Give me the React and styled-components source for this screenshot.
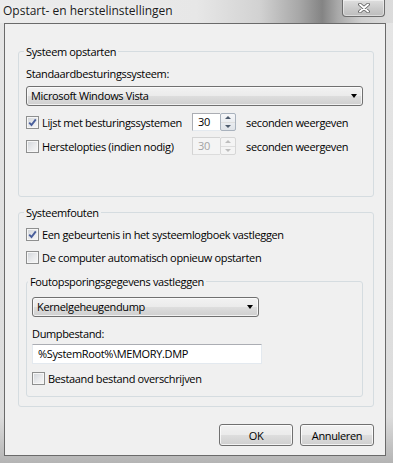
import styled, { createGlobalStyle } from "styled-components";

const GlobalStyle = createGlobalStyle`
  html, body {
    margin: 0;
    padding: 0;
  }
  body {
    font-family: "Open Sans", "Noto Sans", sans-serif;
    font-size: 11px;
    letter-spacing: -0.35px;
    color: #000;
    background: #fff;
  }
  * {
    box-sizing: border-box;
  }
`;

const Window = styled.div`
  width: 393px;
  height: 463px;
  display: flex;
  flex-direction: column;
  background: linear-gradient(180deg, #e6e6e6 0%, #dcdcdc 90%, #b4b4b4 100%);
`;

const TitleBar = styled.div`
  height: 23px;
  flex: none;
  display: flex;
  align-items: flex-start;
  padding: 3px 8px 0 3px;
  background: linear-gradient(
    90deg,
    #ececec 0%,
    #e7e7e7 50%,
    #d2d2d2 66%,
    #a8a8a8 76%,
    #848484 82%,
    #a9a9a9 86%,
    #cfcfcf 92%,
    #dcdcdc 100%
  );
`;

const Title = styled.span`
  font-size: 12px;
  line-height: 16px;
  letter-spacing: 0;
  color: #1b1b1b;
  text-shadow: 0 0 6px rgba(255, 255, 255, 0.9);
`;

const CloseButton = styled.div`
  margin: -3px 0 0 auto;
  width: 43px;
  height: 17px;
  border: 1px solid #6d6d6d;
  border-top: none;
  border-radius: 0 0 4px 4px;
  background: linear-gradient(180deg, #dedede 0%, #cacaca 55%, #bdbdbd 100%);
  box-shadow: inset 0 0 0 1px rgba(255, 255, 255, 0.45);
  display: flex;
  align-items: center;
  justify-content: center;
`;

const Client = styled.div`
  flex: 1;
  margin: 0 7px 7px 4px;
  border: 1px solid #6a6a6a;
  background: #f0f0f0;
  padding: 20px 11px 0 13px;
  display: flex;
  flex-direction: column;
`;

const Group = styled.fieldset`
  margin: ${(p) => p.$top || 0}px 0 0 0;
  padding: ${(p) => p.$pad};
  border: 1px solid #d5dce0;
  border-radius: 3px;
  min-width: 0;
  display: flex;
  flex-direction: column;
  align-items: flex-start;
  align-self: stretch;
`;

const Legend = styled.legend`
  padding: 0 2px;
  margin-left: ${(p) => p.$shift}px;
  line-height: 15px;
`;

const Label = styled.div`
  line-height: 15px;
  margin-top: ${(p) => p.$top || 0}px;
`;

const Combo = styled.div`
  margin-top: ${(p) => p.$top || 0}px;
  width: ${(p) => p.$width}px;
  height: 20px;
  border: 1px solid #707070;
  border-radius: 3px;
  background: linear-gradient(180deg, #f2f2f2 0%, #ebebeb 48%, #dddddd 52%, #cfcfcf 100%);
  box-shadow: inset 0 0 0 1px rgba(255, 255, 255, 0.7);
  display: flex;
  align-items: center;
  padding: 0 5px 0 4px;
  line-height: 18px;
`;

const ComboText = styled.span`
  flex: 1;
`;

const Arrow = styled.span`
  width: 0;
  height: 0;
  border-left: 3.5px solid transparent;
  border-right: 3.5px solid transparent;
  border-top: 4px solid #000;
`;

const OptionGrid = styled.div`
  margin-top: 6px;
  display: grid;
  grid-template-columns: 166px 54px auto;
  grid-auto-rows: 20px;
  row-gap: 4px;
  align-items: center;
`;

const CheckRow = styled.label`
  display: flex;
  align-items: center;
  gap: 3px;
  height: 20px;
  margin-top: ${(p) => p.$top || 0}px;
  line-height: 15px;
`;

const Box = styled.span`
  width: 13px;
  height: 13px;
  flex: none;
  border: 1px solid #8e8f8f;
  background: linear-gradient(135deg, #d0d4d9 0%, #e9eaec 55%, #f7f7f7 100%);
  box-shadow: inset 0 0 0 1px #f6f6f6;
  display: flex;
  align-items: center;
  justify-content: center;
`;

const Spin = styled.div`
  display: flex;
  width: 44px;
  height: 18px;
`;

const SpinEdit = styled.div`
  width: 28px;
  height: 18px;
  border: 1px solid ${(p) => (p.$disabled ? "#d3d3d3" : "#abadb3")};
  border-right: none;
  border-bottom-color: ${(p) => (p.$disabled ? "#dcdcdc" : "#e3e9ef")};
  background: ${(p) => (p.$disabled ? "#f4f4f4" : "#fff")};
  color: ${(p) => (p.$disabled ? "#a3a3a3" : "#000")};
  padding-left: 5px;
  line-height: 16px;
`;

const SpinButtons = styled.div`
  width: 16px;
  height: 18px;
  border: 1px solid ${(p) => (p.$disabled ? "#d6d6d6" : "#a9b2bd")};
  border-radius: 2px;
  display: flex;
  flex-direction: column;
  background: ${(p) => (p.$disabled ? "#f4f4f4" : "linear-gradient(180deg, #f6f7f9, #dfe3e8)")};
`;

const SpinHalf = styled.div`
  flex: 1;
  display: flex;
  align-items: center;
  justify-content: center;
  & + & {
    border-top: 1px solid ${(p) => (p.$disabled ? "#dedede" : "#b8c0ca")};
  }
`;

const Tri = styled.span`
  width: 0;
  height: 0;
  border-left: 3px solid transparent;
  border-right: 3px solid transparent;
  ${(p) => (p.$up ? "border-bottom" : "border-top")}: 3px solid
    ${(p) => (p.$disabled ? "#bdbdbd" : "#4d5b6d")};
`;

const Edit = styled.div`
  margin-top: ${(p) => p.$top || 0}px;
  width: ${(p) => p.$width}px;
  height: 20px;
  border: 1px solid #e3e9ef;
  border-top-color: #abadb3;
  background: #fff;
  padding-left: 5px;
  line-height: 18px;
`;

const ButtonRow = styled.div`
  margin-top: 17px;
  display: flex;
  justify-content: flex-end;
  gap: 7px;
`;

const Button = styled.div`
  width: 74px;
  height: 22px;
  border: 1px solid #707070;
  border-radius: 3px;
  background: linear-gradient(180deg, #f2f2f2 0%, #ebebeb 48%, #dddddd 52%, #cfcfcf 100%);
  box-shadow: inset 0 0 0 1px rgba(255, 255, 255, 0.75);
  display: flex;
  align-items: center;
  justify-content: center;
  line-height: 15px;
`;

function CloseGlyph() {
  return (
    <svg width="12" height="10" viewBox="0 0 12 10">
      <path d="M2 1.5 L10 8.5 M10 1.5 L2 8.5" stroke="#5a5a5a" strokeWidth="3.6" strokeLinecap="round" />
      <path d="M2 1.5 L10 8.5 M10 1.5 L2 8.5" stroke="#fff" strokeWidth="2" strokeLinecap="round" />
    </svg>
  );
}

function Check({ checked, children, top }) {
  return (
    <CheckRow $top={top}>
      <Box>
        {checked && (
          <svg width="9" height="9" viewBox="0 0 9 9">
            <path d="M1.2 4.6 L3.5 7 L7.8 1.4" fill="none" stroke="#4a5f9c" strokeWidth="1.9" />
          </svg>
        )}
      </Box>
      <span>{children}</span>
    </CheckRow>
  );
}

function SpinBox({ value, disabled }) {
  return (
    <Spin>
      <SpinEdit $disabled={disabled}>{value}</SpinEdit>
      <SpinButtons $disabled={disabled}>
        <SpinHalf $disabled={disabled}>
          <Tri $up $disabled={disabled} />
        </SpinHalf>
        <SpinHalf $disabled={disabled}>
          <Tri $disabled={disabled} />
        </SpinHalf>
      </SpinButtons>
    </Spin>
  );
}

export default function App() {
  return (
    <>
      <GlobalStyle />
      <Window>
        <TitleBar>
          <Title>Opstart- en herstelinstellingen</Title>
          <CloseButton>
            <CloseGlyph />
          </CloseButton>
        </TitleBar>
        <Client>
          <Group $pad="7px 10px 40px 7px">
            <Legend $shift={-2}>Systeem opstarten</Legend>
            <Label>Standaardbesturingssysteem:</Label>
            <Combo $top={5} $width={337}>
              <ComboText>Microsoft Windows Vista</ComboText>
              <Arrow />
            </Combo>
            <OptionGrid>
              <Check checked>Lijst met besturingssystemen</Check>
              <SpinBox value="30" />
              <span>seconden weergeven</span>
              <Check>Herstelopties (indien nodig)</Check>
              <SpinBox value="30" disabled />
              <span>seconden weergeven</span>
            </OptionGrid>
          </Group>
          <Group $top={8} $pad="4px 10px 9px 7px">
            <Legend $shift={-2}>Systeemfouten</Legend>
            <Check checked>Een gebeurtenis in het systeemlogboek vastleggen</Check>
            <Check top={3}>De computer automatisch opnieuw opstarten</Check>
            <Group $top={7} $pad="8px 5px 8px 5px">
              <Legend $shift={-4}>Foutopsporingsgegevens vastleggen</Legend>
              <Combo $width={227}>
                <ComboText>Kernelgeheugendump</ComboText>
                <Arrow />
              </Combo>
              <Label $top={9}>Dumpbestand:</Label>
              <Edit $top={3} $width={230}>%SystemRoot%\MEMORY.DMP</Edit>
              <Check top={4}>Bestaand bestand overschrijven</Check>
            </Group>
          </Group>
          <ButtonRow>
            <Button>OK</Button>
            <Button>Annuleren</Button>
          </ButtonRow>
        </Client>
      </Window>
    </>
  );
}
